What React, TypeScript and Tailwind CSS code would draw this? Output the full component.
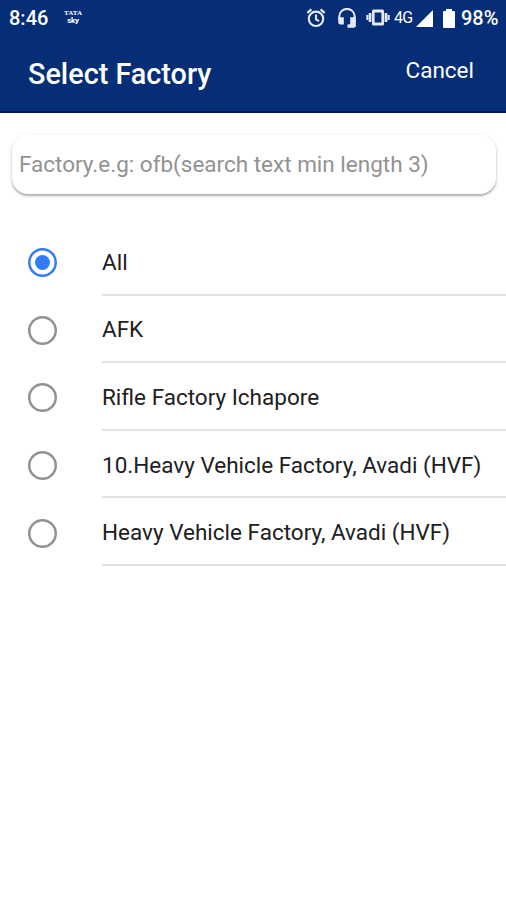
import { useState } from "react";

const factories = [
  "All",
  "AFK",
  "Rifle Factory Ichapore",
  "10.Heavy Vehicle Factory, Avadi (HVF)",
  "Heavy Vehicle Factory, Avadi (HVF)",
];

function AlarmIcon() {
  return (
    <svg className="h-5 w-5 shrink-0" viewBox="0 0 20 20" fill="none" stroke="#e6eaf6" strokeWidth="2.1">
      <circle cx="10" cy="10.800" r="7.200" />
      <path d="M10 6.500v4.800l3 1.900" />
      <path d="M1.300 4.800 5.400 1.400M18.700 4.800l-4.100-3.400" strokeWidth="2.2" />
    </svg>
  );
}

function HeadsetIcon() {
  return (
    <svg className="h-5 w-5 shrink-0" viewBox="0 0 20 20" fill="none">
      <path d="M2.300 12V8.500a7.700 7.600 0 0 1 15.400 0v9.300H11" stroke="#e6eaf6" strokeWidth="2" />
      <path d="M1.300 9.300h5.500v7.200H3.800a2.500 2.500 0 0 1-2.500-2.500zM13.200 9.300h5.500v5.500a1.700 1.700 0 0 1-1.700 1.700h-3.800zM10.500 16.500h8.200v1a2.300 2.300 0 0 1-2.300 2.300h-5.900z" fill="#e6eaf6" />
    </svg>
  );
}

function VibrateIcon() {
  return (
    <svg className="h-5 w-6 shrink-0" viewBox="0 0 24 20" fill="#e6eaf6">
      <path fillRule="evenodd" d="M7.500 1.500h9A1.500 1.500 0 0 1 18 3v13a1.500 1.500 0 0 1-1.500 1.500h-9A1.500 1.500 0 0 1 6 16V3a1.500 1.500 0 0 1 1.500-1.500zm1.100 3v10h6.800v-10z" />
      <path d="M.3 7h2v5h-2zM2.700 5h2.700v9H2.700zM18.600 5h2.700v9h-2.700zM21.700 7h2v5h-2z" />
    </svg>
  );
}

function StatusBar() {
  return (
    <div className="flex h-9 items-center text-[20px] font-medium leading-6 text-white">
      <span className="ml-[9px] w-[55px]">8:46</span>
      <div className="-mt-[1px] flex w-[18px] flex-col items-center font-bold">
        <span className="font-['Liberation_Serif',serif] text-[7px] leading-[7px]">TATA</span>
        <span className="text-[8px] leading-[8px] tracking-[-0.3px]">sky</span>
      </div>
      <div className="ml-[224px] flex items-center">
        <AlarmIcon />
        <span className="w-[11px]" />
        <HeadsetIcon />
        <span className="w-[9px]" />
        <VibrateIcon />
        <span className="ml-[4px] w-[22px] text-[16px] font-normal tracking-[-0.7px] text-white">4G</span>
        <svg className="h-[17px] w-[17px]" viewBox="0 0 17 17" fill="white">
          <path d="M17 0v17H0z" />
        </svg>
        <svg className="ml-[10px] h-[19px] w-3" viewBox="0 0 12 19" fill="white">
          <path d="M3 0h6v2h2a1 1 0 0 1 1 1v15a1 1 0 0 1-1 1H1a1 1 0 0 1-1-1V3a1 1 0 0 1 1-1h2z" />
        </svg>
        <span className="ml-[6px]">98%</span>
      </div>
    </div>
  );
}

export default function App() {
  const [selected, setSelected] = useState("All");

  return (
    <div className="flex h-[900px] w-[506px] flex-col overflow-hidden bg-white font-['Roboto',sans-serif]">
      <header className="h-[113px] border-b-2 border-[#04185c] bg-[#062e76] text-white">
        <StatusBar />
        <div className="flex items-start justify-between pl-[28px] pr-[32px]">
          <h1 className="mt-[22px] text-[28.800px] font-medium leading-8">Select Factory</h1>
          <button className="mt-[20px] text-[22.500px] leading-7">Cancel</button>
        </div>
      </header>

      <div className="ml-[12px] mr-[10px] mt-[22px] flex h-[59px] items-center rounded-[16px] bg-white px-[7px] pb-[2px] shadow-[0_2px_2px_rgba(0,0,0,0.25),0_1px_4px_rgba(0,0,0,0.12)]">
        <input
          className="w-full bg-transparent text-[22.500px] leading-8 outline-none placeholder:text-[#929292]"
          placeholder="Factory.e.g: ofb(search text min length 3)"
        />
      </div>

      <div className="mt-[34px] flex flex-col" role="radiogroup">
        {factories.map((name) => (
          <button
            key={name}
            role="radio"
            aria-checked={selected === name}
            onClick={() => setSelected(name)}
            className="flex h-[67.6px] items-center pl-[28px] text-left"
          >
            <span
              className={
                selected === name
                  ? "mt-[2px] flex h-[29px] w-[29px] items-center justify-center rounded-full shadow-[inset_0_0_0_2.5px_#347bf6]"
                  : "mt-[2px] h-[29px] w-[29px] rounded-full shadow-[inset_0_0_0_2.5px_#929292]"
              }
            >
              {selected === name && <span className="h-[15px] w-[15px] rounded-full bg-[#347bf6]" />}
            </span>
            <span className="ml-[45px] flex h-full flex-1 items-center whitespace-nowrap border-b-2 border-[#e2e2e2] pt-[2px] text-[22.500px] leading-7 text-[#202020]">
              {name}
            </span>
          </button>
        ))}
      </div>
    </div>
  );
}
